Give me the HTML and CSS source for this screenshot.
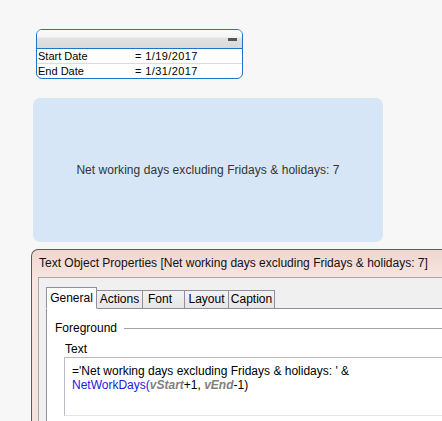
FILE: index.html
```html
<!DOCTYPE html>
<html>
<head>
<meta charset="utf-8">
<link rel="stylesheet" href="styles.css">
</head>
<body>
<div class="page">
  <div class="listbox">
    <div class="lb-head"><span class="lb-min"></span></div>
    <div class="lb-row"><span class="lb-name">Start Date</span><span class="lb-val">= 1/19/2017</span></div>
    <div class="lb-row last"><span class="lb-name">End Date</span><span class="lb-val">= 1/31/2017</span></div>
  </div>
  <div class="textobj">Net working days excluding Fridays &amp; holidays: 7</div>
  <div class="dialog">
    <div class="dlg-title">Text Object Properties [Net working days excluding Fridays &amp; holidays: 7]</div>
    <div class="dlg-client">
      <div class="tabs">
        <div class="tab active t-general">General</div>
        <div class="tab t-actions">Actions</div>
        <div class="tab t-font">Font</div>
        <div class="tab t-layout">Layout</div>
        <div class="tab t-caption">Caption</div>
      </div>
      <div class="panel">
        <div class="group"><span class="group-label">Foreground</span><span class="group-rule"></span></div>
        <div class="field-label">Text</div>
        <div class="editor">
          <div class="code-line">='Net working days excluding Fridays &amp; holidays: ' &amp;</div>
          <div class="code-line"><span class="fn">NetWorkDays(</span><span class="var">vStart</span>+1, <span class="var">vEnd</span>-1)</div>
        </div>
      </div>
    </div>
  </div>
</div>
</body>
</html>
```

FILE: styles.css
```css
html, body {
  margin: 0;
  padding: 0;
}
body {
  background: #f7f7f7;
  width: 442px;
  height: 421px;
  overflow: hidden;
  font-family: "Liberation Sans", Arial, sans-serif;
}
.page {
  padding-top: 29px;
}
.listbox {
  box-sizing: border-box;
  margin-left: 36px;
  width: 207px;
  border: 1px solid #1f73c8;
  border-radius: 6px;
  background: #fff;
  overflow: hidden;
}
.lb-head {
  height: 18px;
  border-bottom: 1px solid #1f73c8;
  background: linear-gradient(#fafafa 0%, #f4f4f4 40%, #e2e2e2 45%, #d9d9d9 100%);
  display: flex;
  justify-content: flex-end;
  align-items: center;
  padding-right: 5px;
}
.lb-min {
  width: 9px;
  height: 3px;
  background: #555;
  margin-top: 1px;
}
.lb-row {
  height: 14px;
  line-height: 14px;
  border-bottom: 1px solid #dcdcdc;
  font-size: 11px;
  color: #000;
  display: flex;
  padding-left: 1px;
}
.lb-row.last {
  border-bottom: none;
}
.lb-name {
  width: 97px;
}
.lb-val {
  letter-spacing: 0.4px;
}
.textobj {
  margin-top: 19px;
  margin-left: 33px;
  width: 350px;
  height: 144px;
  border-radius: 7px;
  background: #d6e6f6;
  display: flex;
  align-items: center;
  justify-content: center;
  font-size: 12px;
  color: #333;
  letter-spacing: 0.05px;
}
.dialog {
  margin-top: 7px;
  margin-left: 31px;
  width: 430px;
  height: 180px;
  border: 1px solid #5c5c5c;
  border-bottom: none;
  border-radius: 7px 7px 0 0;
  background: linear-gradient(#f0d6cf, #f7e6e2 30px, #f4e2de);
  padding-left: 6px;
}
.dlg-title {
  height: 27px;
  line-height: 27px;
  font-size: 12px;
  color: #111;
  padding-left: 1px;
  white-space: nowrap;
}
.dlg-client {
  border-left: 1px solid #a8a8a8;
  border-top: 1px solid #a8a8a8;
  background: #f0f0f0;
  padding: 8px 0 0 7px;
  height: 150px;
}
.tabs {
  display: flex;
  align-items: flex-end;
  height: 22px;
  position: relative;
  z-index: 1;
}
.tab {
  box-sizing: border-box;
  height: 18px;
  line-height: 17px;
  border: 1px solid #8e9199;
  border-bottom: none;
  border-left: none;
  background: linear-gradient(#f2f2f2, #e6e6e6);
  font-size: 12px;
  color: #000;
  text-align: center;
}
.tab.active {
  height: 22px;
  line-height: 20px;
  background: #fff;
  border-left: 1px solid #8e9199;
  border-bottom: 1px solid #fff;
  margin-bottom: -1px;
}
.t-general { width: 51px; }
.t-actions { width: 46px; }
.t-font { width: 42px; text-align: left; padding-left: 5px; }
.t-layout { width: 44px; }
.t-caption { width: 46px; }
.panel {
  border: 1px solid #8e9199;
  border-bottom: none;
  background: #fff;
  height: 120px;
  padding: 11px 0 0 8px;
}
.group {
  display: flex;
  align-items: center;
  gap: 7px;
  font-size: 12px;
  height: 16px;
}
.group-rule {
  width: 320px;
  height: 1px;
  background: #a5a5a5;
}
.field-label {
  font-size: 12px;
  margin: 6px 0 0 10px;
  height: 15px;
  line-height: 15px;
}
.editor {
  margin: 0 0 0 9px;
  border: 1px solid #b9bcc2;
  border-bottom-color: #e3e5e8;
  border-right: none;
  height: 51px;
  padding: 6px 0 0 7px;
  font-size: 12px;
  line-height: 14px;
  color: #000;
  white-space: nowrap;
}
.fn {
  color: #2020e0;
}
.var {
  color: #808080;
  font-style: italic;
  font-weight: bold;
}
```
